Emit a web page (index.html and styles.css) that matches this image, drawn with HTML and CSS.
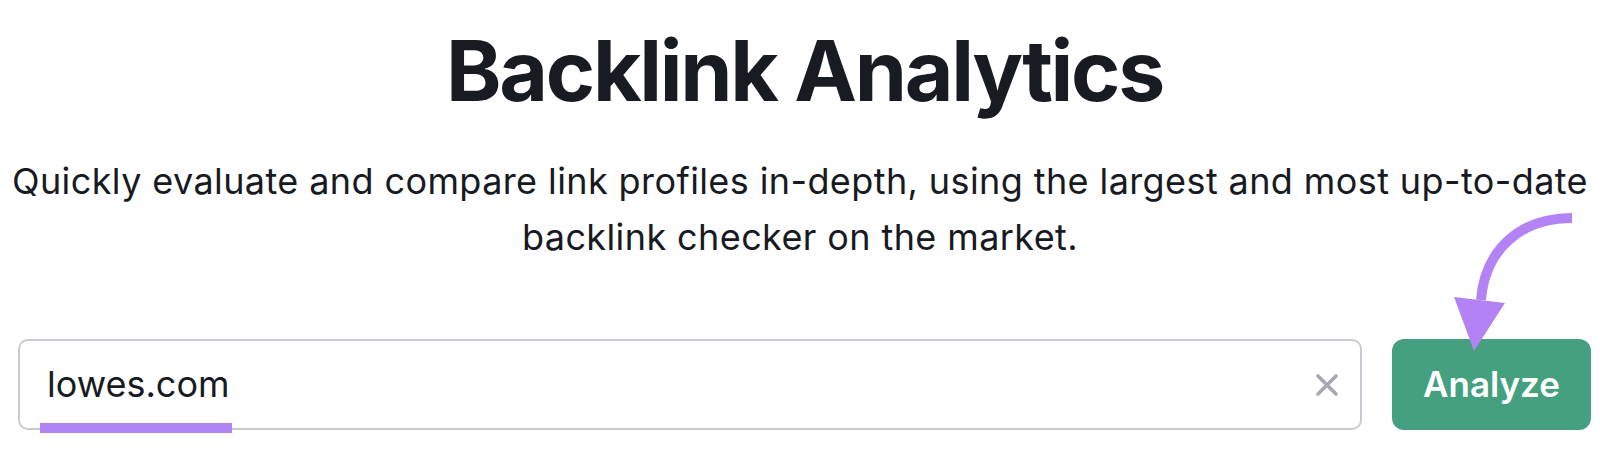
FILE: index.html
```html
<!DOCTYPE html>
<html lang="en">
<head>
  <meta charset="UTF-8" />
  <title>Backlink Analytics</title>
  <link rel="stylesheet" href="styles.css">
</head>
<body>
  <div class="page">
    <h1 class="title">Backlink Analytics</h1>
    <p class="subtitle">Quickly evaluate and compare link profiles in-depth, using the largest and most up-to-date backlink checker on the market.</p>

    <form class="search" onsubmit="return false">
      <!-- Domain input -->
      <div class="field">
        <input class="field-input" type="text" value="lowes.com" />
        <svg class="clear" width="24" height="24" viewBox="0 0 24 24">
          <path d="M3 3 L21 21 M21 3 L3 21" stroke="#a6a8b2" stroke-width="3.6" stroke-linecap="round" />
        </svg>
        <span class="mark"></span>
      </div>
      <button type="submit" class="button">Analyze</button>
    </form>

    <!-- annotation arrow -->
    <svg class="arrow" width="170" height="160" viewBox="0 0 170 160">
      <path d="M142 18 C90 18 55 50 51 100" fill="none" stroke="#b382f5" stroke-width="10" />
      <polygon points="24,97 75,103 44,151" fill="#b382f5" />
    </svg>
  </div>
</body>
</html>
```

FILE: styles.css
```css
body {
  margin: 0;
  font-family: Inter, "Noto Sans", sans-serif;
  color: #171a22;
  background: white;
}
.page {
  position: relative;
  width: 1600px;
  height: 466px;
  padding: 21px 9px 0 18px;
  box-sizing: border-box;
}
.title {
  margin: 0;
  text-align: center;
  font-size: 84px;
  line-height: 1.2;
  font-weight: 700;
  letter-spacing: -2.3px;
  color: #191b23;
}
.subtitle {
  margin: 31px -9px 0 -18px;
  text-align: center;
  font-size: 36px;
  line-height: 56px;
  letter-spacing: 0.4px;
  font-weight: 400;
}
.search {
  display: flex;
  gap: 30px;
  margin-top: 74px;
}
.field {
  position: relative;
  flex: 1;
}
.field-input {
  width: 100%;
  height: 91px;
  box-sizing: border-box;
  padding: 0 60px 0 27px;
  border: 2px solid #c9cbd3;
  border-radius: 10px;
  font-family: Inter, "Noto Sans", sans-serif;
  font-size: 36px;
  color: #171a22;
  outline: none;
}
.clear {
  position: absolute;
  right: 23px;
  top: 34px;
}
.mark {
  position: absolute;
  left: 22px;
  top: 84px;
  width: 192px;
  height: 10px;
  background: #b084f5;
}
.button {
  width: 199px;
  height: 91px;
  border: none;
  border-radius: 12px;
  background-color: #45a07f;
  color: white;
  font-family: Inter, "Noto Sans", sans-serif;
  font-size: 35px;
  font-weight: 600;
  cursor: pointer;
}
.arrow {
  position: absolute;
  left: 1430px;
  top: 200px;
}
```
